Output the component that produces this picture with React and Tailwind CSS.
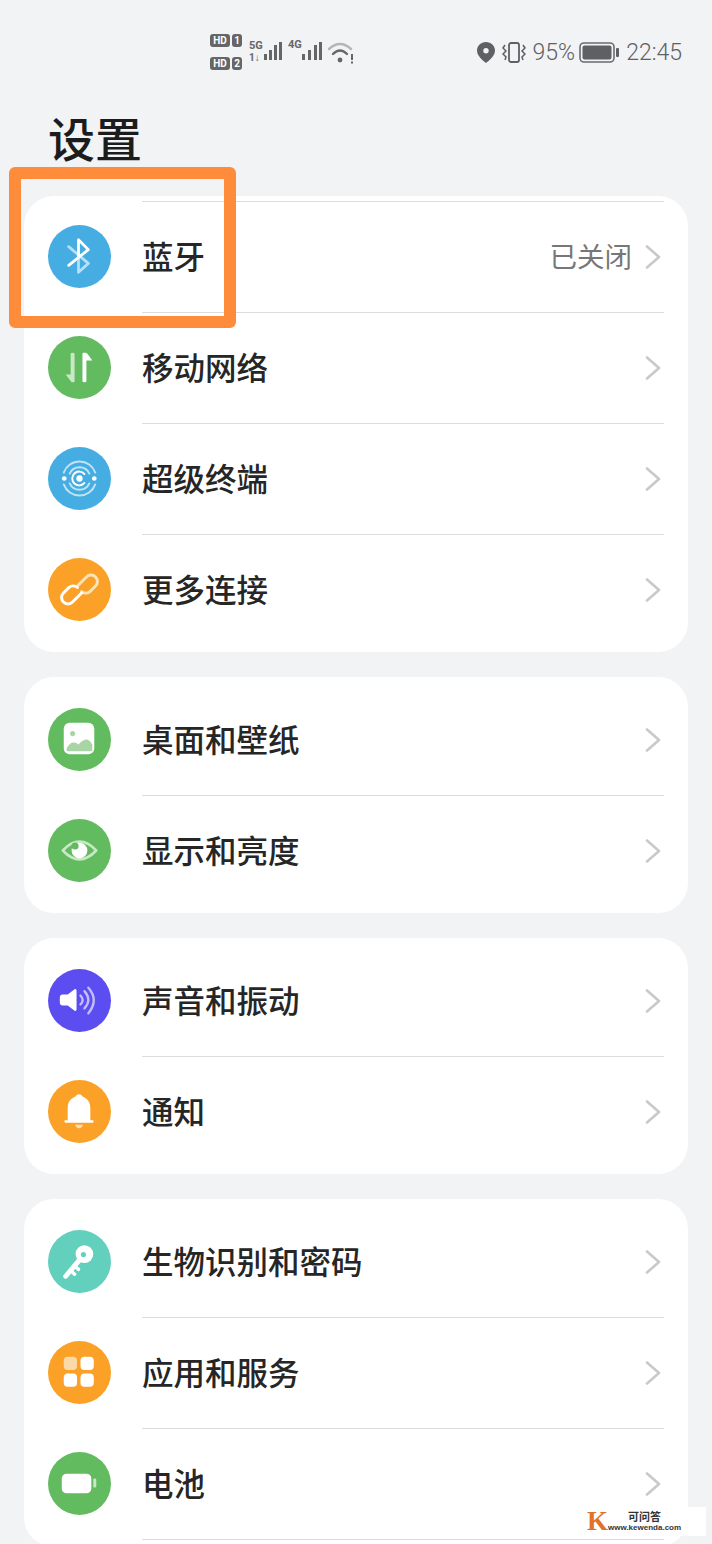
import React from 'react';

const FONT = "font-['Roboto','Noto_Sans_CJK_SC',sans-serif]";

const Ico = ({ children }) => (
  <svg viewBox="0 0 64 64" className="w-full h-full" fill="none">
    {children}
  </svg>
);

const BluetoothIcon = () => (
  <Ico>
    <path d="M21 22 L41 39 L31 48 V32" stroke="#b5e0f7" strokeWidth="2.8" strokeLinejoin="round" strokeLinecap="round" />
    <path d="M21 41 L41 25 L31 15 V32" stroke="#fff" strokeWidth="2.8" strokeLinejoin="round" strokeLinecap="round" />
  </Ico>
);

const MobileIcon = () => (
  <Ico>
    <path d="M35 46 V18 Q35 17 36 17 H38 Q39 17 40 18 L45 25 H39 V46 Q39 47 37 47 Q35 47 35 46Z" fill="#fff" />
    <path d="M27 18 V46 Q27 47 26 47 H24 L18 39 H23 V18 Q23 17 25 17 Q27 17 27 18Z" fill="#c9e8c6" />
  </Ico>
);

const SuperIcon = () => (
  <Ico>
    <g stroke="#bfe3f7" strokeWidth="2" strokeLinecap="round">
      <path d="M16 26 A17 17 0 0 1 48 26" />
      <path d="M16 38 A17 17 0 0 0 48 38" />
      <path d="M22 27 A11 11 0 0 1 42 27 M42 37 A11 11 0 0 1 22 37" />
    </g>
    <path d="M37 27.5 A7 7 0 1 0 37 36.5" stroke="#fff" strokeWidth="2" strokeLinecap="round" />
    <circle cx="32" cy="32" r="3.2" fill="#fff" />
    <circle cx="16.5" cy="32" r="2.4" fill="#fff" />
    <circle cx="47" cy="32" r="2.4" fill="#fff" />
  </Ico>
);

const LinkIcon = () => (
  <Ico>
    <g transform="rotate(-45 32 32)" strokeWidth="3" strokeLinecap="round">
      <path d="M33 28 H46 A6.5 6.5 0 0 1 46 41 H38 A6.5 6.5 0 0 1 32 35" stroke="#fde3b8" />
      <path d="M31 36 H18 A6.5 6.5 0 0 1 18 23 H26 A6.5 6.5 0 0 1 32 29" stroke="#fff" />
    </g>
  </Ico>
);

const WallpaperIcon = () => (
  <Ico>
    <rect x="16" y="15" width="31" height="32" rx="6" fill="#fff" />
    <circle cx="25" cy="26" r="2.6" fill="#a9d5a6" />
    <path d="M19 44 V41 Q22 35 26 35 Q29 35 31 37 Q35 32 40 32 Q43 33 45 37 V44Z" fill="#a9d5a6" />
  </Ico>
);

const EyeIcon = () => (
  <Ico>
    <path d="M15 32 Q32 14 49 32 Q32 50 15 32Z" stroke="#c9e8c6" strokeWidth="2.6" strokeLinejoin="round" />
    <circle cx="32" cy="32" r="8" fill="#fff" />
    <circle cx="27.5" cy="27.5" r="3.6" fill="#62bb5f" />
  </Ico>
);

const SoundIcon = () => (
  <Ico>
    <path d="M15 26 H20 L27 20.5 Q29 20 29 22 V41 Q29 43 27 42.5 L20 37 H15 Q12 37 12 34 V29 Q12 26 15 26Z" fill="#fff" />
    <g stroke="#c3bdfb" strokeWidth="2.4" strokeLinecap="round">
      <path d="M33 27 Q37.5 31.5 33 36" />
      <path d="M37 22.5 Q45 31.5 37 40" />
      <path d="M41 19 Q52 31.5 41 45" />
    </g>
  </Ico>
);

const BellIcon = () => (
  <Ico>
    <path d="M20 41 V29 C20 22 23 19 27.5 17 Q31.5 12 35.5 17 C40 19 43 22 43 29 V41 H46 Q47 43.5 45 43.5 H18 Q16 43.5 17 41Z" fill="#fff" />
    <path d="M27.5 45.5 H35.5 Q34.5 49 31.5 49 Q28.5 49 27.5 45.5Z" fill="#fde3b8" />
  </Ico>
);

const KeyIcon = () => (
  <Ico>
    <path d="M34 28 L18 47" stroke="#fff" strokeWidth="5" strokeLinecap="round" />
    <path d="M23 41 L27 45 M27 36.5 L31 40" stroke="#fff" strokeWidth="3.4" strokeLinecap="round" />
    <circle cx="37" cy="24.5" r="9" fill="#fff" />
    <circle cx="36" cy="25" r="2.6" fill="#62d0bd" />
  </Ico>
);

const AppsIcon = () => (
  <Ico>
    <rect x="16" y="16" width="13.5" height="13.5" rx="4" fill="#fcd9a8" />
    <rect x="33" y="16" width="13.5" height="13.5" rx="4" fill="#fff" />
    <rect x="16" y="33" width="13.5" height="13.5" rx="4" fill="#fff" />
    <rect x="33" y="33" width="13.5" height="13.5" rx="4" fill="#fff" />
  </Ico>
);

const BatteryIcon = () => (
  <Ico>
    <rect x="14" y="22" width="30" height="20" rx="5" fill="#fff" />
    <rect x="46" y="27" width="3" height="9" rx="1.2" fill="#c9e8c6" />
  </Ico>
);

const Chevron = () => (
  <svg viewBox="0 0 16 24" className="w-[16px] h-[24px]" fill="none">
    <path d="M2 1.5 L14 12 L2 22.5" stroke="#c9c9c9" strokeWidth="2.6" strokeLinecap="round" strokeLinejoin="round" />
  </svg>
);

const groups = [
  [
    { label: '蓝牙', value: '已关闭', color: 'bg-[#46ade3]', icon: BluetoothIcon },
    { label: '移动网络', color: 'bg-[#62bb5f]', icon: MobileIcon },
    { label: '超级终端', color: 'bg-[#46ade3]', icon: SuperIcon },
    { label: '更多连接', color: 'bg-[#fba127]', icon: LinkIcon },
  ],
  [
    { label: '桌面和壁纸', color: 'bg-[#62bb5f]', icon: WallpaperIcon },
    { label: '显示和亮度', color: 'bg-[#62bb5f]', icon: EyeIcon },
  ],
  [
    { label: '声音和振动', color: 'bg-[#5b4df0]', icon: SoundIcon },
    { label: '通知', color: 'bg-[#fba127]', icon: BellIcon },
  ],
  [
    { label: '生物识别和密码', color: 'bg-[#62d0bd]', icon: KeyIcon },
    { label: '应用和服务', color: 'bg-[#fba127]', icon: AppsIcon },
    { label: '电池', color: 'bg-[#62bb5f]', icon: BatteryIcon },
  ],
];

const Row = ({ item, hideLine }) => {
  const Icon = item.icon;
  return (
    <div className="flex h-[111px] items-center pl-[24px] pr-[24px]">
      <div className={`w-[63px] h-[63px] rounded-full shrink-0 ${item.color}`}>
        <Icon />
      </div>
      <div className={`ml-[31px] flex-1 h-full flex items-center justify-between pr-[3px] border-t ${hideLine ? 'border-transparent' : 'border-[#dcdcdc]'}`}>
        <span className="pt-[3px] text-[31.5px] font-medium text-[#262626] leading-none">{item.label}</span>
        <div className="flex items-center gap-[13px]">
          {item.value && <span className="pt-[1px] text-[27.5px] text-[#777777] leading-none">{item.value}</span>}
          <Chevron />
        </div>
      </div>
    </div>
  );
};

const HdBadge = ({ n }) => (
  <div className="flex items-center gap-[2px]">
    <span className="w-[20px] h-[13px] rounded-[3px] bg-[#666666] text-white text-[10px] font-bold leading-[13px] text-center">HD</span>
    <span className="w-[10px] h-[13px] rounded-[3px] bg-[#666666] text-white text-[10px] font-bold leading-[13px] text-center">{n}</span>
  </div>
);

const Bars = ({ xs, tops }) => (
  <g fill="#666666">
    {xs.map((x, i) => (
      <rect key={x} x={x} y={tops[i]} width="3" height={26 - tops[i]} />
    ))}
  </g>
);

const Signals = () => (
  <svg viewBox="0 0 105 32" className="w-[105px] h-[32px]" fill="none">
    <text x="0" y="15" fontSize="11" fontWeight="700" fill="#666666" fontFamily="Roboto">5G</text>
    <text x="0" y="27" fontSize="10" fontWeight="700" fill="#666666" fontFamily="Roboto">1↓</text>
    <Bars xs={[15, 20, 25, 30]} tops={[20, 16, 11, 8]} />
    <text x="39" y="14" fontSize="11" fontWeight="700" fill="#666666" fontFamily="Roboto">4G</text>
    <Bars xs={[53, 59, 65, 70]} tops={[20, 16, 11, 8]} />
    <path d="M80 15 Q91 5 102 15" stroke="#b5b5b5" strokeWidth="2.4" strokeLinecap="round" />
    <path d="M84 20 Q91 13 98 20" stroke="#666666" strokeWidth="2.4" strokeLinecap="round" />
    <circle cx="91" cy="26" r="2.4" fill="#666666" />
    <rect x="102" y="20" width="2" height="6" fill="#666666" />
    <rect x="102" y="27.5" width="2" height="2" fill="#666666" />
  </svg>
);

const PinIcon = () => (
  <svg viewBox="0 0 18 21" className="w-[18px] h-[21px]">
    <path fillRule="evenodd" d="M9 0 C14 0 18 3.7 18 8.5 C18 13.5 13 18 9 21 C5 18 0 13.5 0 8.5 C0 3.7 4 0 9 0Z M9 6 A2.7 2.7 0 1 0 9 11.4 A2.7 2.7 0 1 0 9 6Z" fill="#5f6063" />
  </svg>
);

const VibrateIcon = () => (
  <svg viewBox="0 0 24 21" className="w-[24px] h-[21px]" fill="none" stroke="#5f6063">
    <rect x="7" y="1" width="10" height="19" rx="2" strokeWidth="1.8" />
    <path d="M3 3 L1 6 L4 9 L1 12 L4 15 L3 18" strokeWidth="1.5" />
    <path d="M21 3 L23 6 L20 9 L23 12 L20 15 L21 18" strokeWidth="1.5" />
  </svg>
);

const StatusBattery = () => (
  <svg viewBox="0 0 40 21" className="w-[40px] h-[21px]" fill="none">
    <rect x="1" y="1" width="34" height="19" rx="4" stroke="#6a6b6e" strokeWidth="1.6" />
    <rect x="3.5" y="3.5" width="29" height="14" rx="2" fill="#5f6063" />
    <rect x="37" y="6" width="3" height="9" rx="1" fill="#5f6063" />
  </svg>
);

export default function App() {
  return (
    <div className={`relative w-[712px] h-[1544px] overflow-hidden bg-[#f1f3f5] ${FONT}`}>
      {/* Status bar */}
      <div className="flex h-[104px] items-start justify-between pl-[210px] pr-[30px] pt-[34px]">
        <div className="flex items-start gap-[7px]">
          <div className="flex flex-col gap-[10px]">
            <HdBadge n="1" />
            <HdBadge n="2" />
          </div>
          <Signals />
        </div>
        <div className="flex items-center text-[#5f6063] h-[36px]">
          <PinIcon />
          <span className="ml-[7px]"><VibrateIcon /></span>
          <span className="ml-[7px] text-[23px] font-light leading-none">95%</span>
          <span className="ml-[4px]"><StatusBattery /></span>
          <span className="ml-[7px] text-[23px] font-light leading-none">22:45</span>
        </div>
      </div>

      {/* Title */}
      <div className="h-[92px] pl-[48px]">
        <h1 className="text-[47px] font-medium text-[#1c1c1c] leading-[74px]">设置</h1>
      </div>

      {/* Setting groups */}
      <div className="flex flex-col gap-[25px] px-[24px]">
        {groups.map((group, g) => (
          <div key={g} className={`bg-white rounded-[30px] ${g === 0 ? 'pt-[5px]' : 'pt-[7px]'} pb-[7px]`}>
            {group.map((item, i) => (
              <Row key={item.label} item={item} hideLine={g !== 0 && i === 0} />
            ))}
            {g === 3 && <div className="ml-[118px] mr-[24px] border-t border-[#dcdcdc]" />}
          </div>
        ))}
      </div>

      {/* Orange highlight */}
      <div className="absolute left-[9px] top-[167px] w-[227px] h-[161px] border-[12px] border-[#ff8c3b] rounded-[6px]" />

      {/* Watermark */}
      <div className="absolute left-[580px] top-[1507px] w-[126px] h-[29px] bg-white flex items-center">
        <span className="ml-[7px] font-['Liberation_Serif',serif] font-bold text-[27px] leading-none text-[#e2722a]">K</span>
        <div className="flex flex-col items-center leading-none font-['Liberation_Sans','Noto_Sans_CJK_SC',sans-serif] font-bold text-[#333333]">
          <span className="text-[11px] leading-[12px]">可问答</span>
          <span className="text-[8px] leading-[10px]">www.kewenda.com</span>
        </div>
      </div>
    </div>
  );
}
